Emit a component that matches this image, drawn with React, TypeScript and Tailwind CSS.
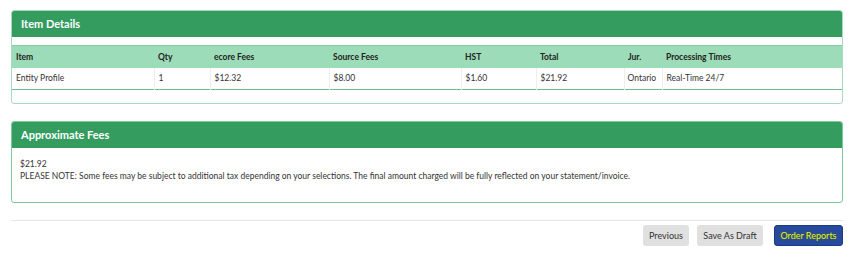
import React from 'react';

const cols = [
  { label: 'Item', w: 'w-[142px]' },
  { label: 'Qty', w: 'w-[56px]' },
  { label: 'ecore Fees', w: 'w-[119px]' },
  { label: 'Source Fees', w: 'w-[132px]' },
  { label: 'HST', w: 'w-[75px]' },
  { label: 'Total', w: 'w-[88px]' },
  { label: 'Jur.', w: 'w-[38px]' },
  { label: 'Processing Times', w: 'w-[180px]' },
];

const row = ['Entity Profile', '1', '$12.32', '$8.00', '$1.60', '$21.92', 'Ontario', 'Real-Time 24/7'];

const PanelHeader: React.FC<{ title: string }> = ({ title }) => (
  <div className="h-[26px] bg-[#349c5f] rounded-t-[2px] flex items-center pt-[1px] px-[9px] text-white font-bold text-[11px]">
    {title}
  </div>
);

export default function App() {
  return (
    <div className="w-[859px] h-[270px] bg-white font-['Lato','Liberation_Sans',sans-serif] text-[#333] pt-[10px] pl-[11px]">
      <div className="w-[832px] border border-[#a9dcbf] rounded-[3px]">
        <PanelHeader title="Item Details" />
        <div className="h-[8px]" />
        <table className="table-fixed w-[830px] border-collapse text-[8.5px]">
          <thead>
            <tr className="bg-[#9ddcb8] h-[22px] border-t border-[#85cca4]">
              {cols.map((c) => (
                <th key={c.label} className={`${c.w} text-left font-bold px-[4px] pt-[1px] text-[#222]`}>
                  {c.label}
                </th>
              ))}
            </tr>
          </thead>
          <tbody>
            <tr className="h-[22px] border-b border-[#6cbf8c]">
              {row.map((v, i) => (
                <td
                  key={i}
                  className={`${i === 6 ? 'px-[3px]' : 'px-[4px]'} pt-[1px] ${i > 0 ? 'border-l border-[#eeeeee]' : ''}`}
                >
                  {v}
                </td>
              ))}
            </tr>
          </tbody>
        </table>
        <div className="h-[13px]" />
      </div>

      <div className="w-[832px] mt-[17px] border border-[#7cc99b] rounded-[3px]">
        <PanelHeader title="Approximate Fees" />
        <div className="px-[8px] pt-[10px] pb-[20px] text-[8.5px] leading-[12px]">
          <div>$21.92</div>
          <div>
            PLEASE NOTE: Some fees may be subject to additional tax depending on your selections. The final amount charged
            will be fully reflected on your statement/invoice.
          </div>
        </div>
      </div>

      <div className="w-[832px] mt-[17px] border-t border-[#e5e5e5] pt-[4px] flex justify-end gap-[8px] text-[9px]">
        <button className="h-[21px] w-[46px] bg-[#e0e0e0] rounded-[3px] text-[#333]">Previous</button>
        <button className="h-[21px] w-[66px] bg-[#e0e0e0] rounded-[3px] text-[#333]">Save As Draft</button>
        <button className="h-[21px] w-[69px] ml-[3px] bg-[#274a9e] border border-[#1c3a80] rounded-[3px] text-[#e6f02a] [text-shadow:0_0_3px_#4a6a00]">
          Order Reports
        </button>
      </div>
    </div>
  );
}
